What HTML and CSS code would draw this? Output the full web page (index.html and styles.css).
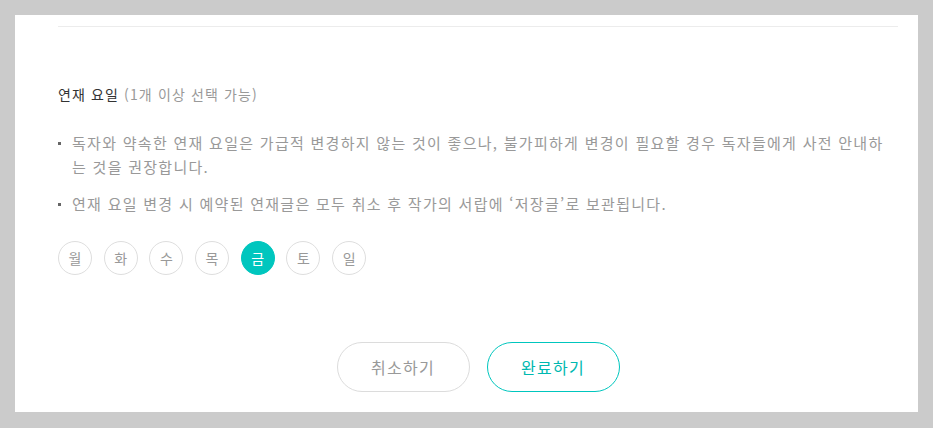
FILE: index.html
```html
<!DOCTYPE html>
<html lang="ko">
<head>
<meta charset="utf-8">
<link rel="stylesheet" href="styles.css">
</head>
<body>
<div class="panel">
  <hr class="divider">
  <h3 class="title">연재 요일 <span class="sub">(1개 이상 선택 가능)</span></h3>
  <ul class="notes">
    <li>독자와 약속한 연재 요일은 가급적 변경하지 않는 것이 좋으나, 불가피하게 변경이 필요할 경우 독자들에게 사전 안내하는 것을 권장합니다.</li>
    <li>연재 요일 변경 시 예약된 연재글은 모두 취소 후 작가의 서랍에 ‘저장글’로 보관됩니다.</li>
  </ul>
  <div class="days">
    <span class="day">월</span>
    <span class="day">화</span>
    <span class="day">수</span>
    <span class="day">목</span>
    <span class="day on">금</span>
    <span class="day">토</span>
    <span class="day">일</span>
  </div>
  <div class="actions">
    <button class="btn cancel">취소하기</button>
    <button class="btn ok">완료하기</button>
  </div>
</div>
</body>
</html>
```
FILE: styles.css
```css
html, body { margin: 0; padding: 0; }
body {
  background: #cbcbcb;
  padding: 15px 15px 16px 15px;
  font-family: "Noto Sans CJK KR", "Noto Sans", sans-serif;
  letter-spacing: 0.08em;
}
.panel {
  background: #fff;
  height: 397px;
  box-sizing: border-box;
  padding: 11px 20px 0 43px;
}
.divider {
  border: 0;
  border-top: 1px solid #ececec;
  margin: 0;
}
.title {
  margin: 57px 0 0;
  font-size: 14px;
  font-weight: 400;
  line-height: 20px;
  color: #333;
  letter-spacing: 0.08em;
}
.title .sub { color: #999; }
.notes {
  list-style: none;
  margin: 27px 0 0;
  padding: 0;
}
.notes li {
  position: relative;
  padding-left: 14px;
  font-size: 15px;
  line-height: 24px;
  color: #999;
  margin-bottom: 13px;
}
.notes li::before {
  content: "";
  position: absolute;
  left: 0;
  top: 11px;
  width: 3px;
  height: 3px;
  background: #666;
}
.days {
  display: flex;
  gap: 11.7px;
  margin-top: 25px;
}
.day {
  width: 32px;
  height: 32px;
  border: 1px solid #dedede;
  border-radius: 50%;
  display: flex;
  align-items: center;
  justify-content: center;
  font-size: 14px;
  letter-spacing: 0;
  color: #999;
}
.day.on {
  background: #00c6be;
  border-color: #00c6be;
  color: #fff;
}
.actions {
  display: flex;
  justify-content: center;
  gap: 17px;
  margin-top: 67px;
}
.btn {
  width: 133px;
  height: 50px;
  border-radius: 25px;
  background: #fff;
  font-family: inherit;
  font-size: 16px;
  letter-spacing: 0.08em;
  cursor: pointer;
}
.btn.cancel { border: 1px solid #dcdcdc; color: #999; }
.btn.ok { border: 1px solid #00c6be; color: #00b8b0; }
```
